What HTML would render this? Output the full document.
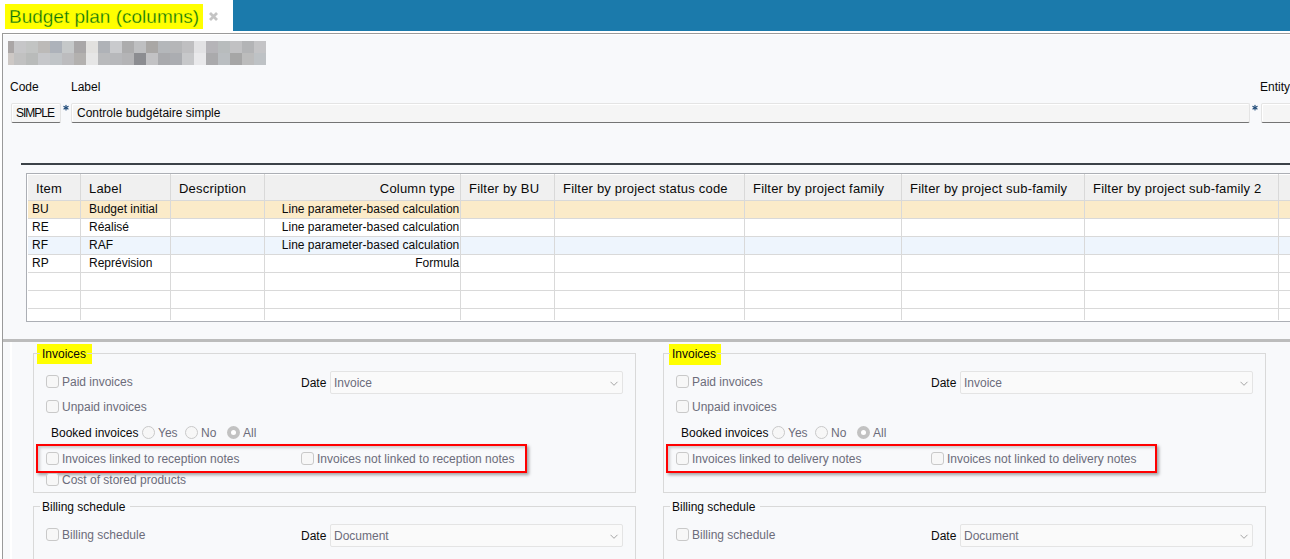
<!DOCTYPE html>
<html><head><meta charset="utf-8">
<style>
html,body{margin:0;padding:0;}
body{width:1290px;height:559px;overflow:hidden;position:relative;background:#fff;font-family:"Liberation Sans",sans-serif;font-size:12px;color:#0a0a0a;}
.a{position:absolute;white-space:nowrap;}
.t{position:absolute;white-space:nowrap;line-height:14px;font-size:12px;}
.h{position:absolute;white-space:nowrap;line-height:15px;font-size:13px;color:#0a0a0a;letter-spacing:0.2px;}
.g{color:#6c6c7a;}
.bx{position:absolute;box-sizing:border-box;}
.cb{position:absolute;box-sizing:border-box;width:13px;height:13px;border:1px solid #c9c9c9;border-radius:3px;background:#f7f7f7;}
.rd{position:absolute;box-sizing:border-box;width:13px;height:13px;border:1px solid #c9c9c9;border-radius:50%;background:#f7f7f7;}
.rdc{position:absolute;box-sizing:border-box;width:13px;height:13px;border-radius:50%;background:#c2c2c2;}
.rdc:after{content:"";position:absolute;left:4px;top:4px;width:5px;height:5px;border-radius:50%;background:#fff;}
.sel{position:absolute;box-sizing:border-box;height:23px;border:1px solid #e4e4e4;border-radius:2px;background:#fafafa;}
.chev{position:absolute;width:8px;height:5px;}
.fs{position:absolute;box-sizing:border-box;border:1px solid #d9d9d9;}
.red{position:absolute;box-sizing:border-box;border:2px solid #ff0000;box-shadow:2px 2px 3px rgba(0,0,0,.35), inset 2px 2px 3px rgba(0,0,0,.18);}
.row{position:absolute;left:28px;width:1262px;height:18px;}
.vl{position:absolute;width:1px;background:#d9d9d9;}
.hl2{position:absolute;height:1px;background:#d9d9d9;}
.hl{position:absolute;height:1px;background:#d9d9d9;}
.mz{position:absolute;width:12px;height:12px;}
</style></head><body>

<!-- tab bar -->
<div class="bx" style="left:5px;top:4px;width:198px;height:25px;background:#ffff00;"></div>
<div class="a" style="left:9px;top:6px;font-size:19px;line-height:22px;color:#0b720b;-webkit-text-stroke:0.3px #ffff00;">Budget plan (columns)</div>
<svg class="a" style="left:208px;top:11px;" width="11" height="11" viewBox="0 0 11 11"><path d="M2 2 L9 9 M9 2 L2 9" stroke="#c4c4c4" stroke-width="2.8"/></svg>
<div class="bx" style="left:233px;top:0;width:1057px;height:31px;background:#1b7aab;"></div>

<!-- panel -->
<div class="bx" style="left:2px;top:33px;width:1288px;height:526px;background:#f8f9fb;border-left:1px solid #9a9a9a;border-top:1px solid #9a9a9a;"></div>
<div class="bx" style="left:3px;top:34px;width:1287px;height:1px;background:#fff;"></div>

<!-- mosaic -->
<div class="mz" style="left:8px;top:41px;width:6px;background:#aaa6a6;"></div>
<div class="mz" style="left:14px;top:41px;width:12px;background:#c6c6c8;"></div>
<div class="mz" style="left:26px;top:41px;width:12px;background:#c2c4c3;"></div>
<div class="mz" style="left:38px;top:41px;width:12px;background:#bcbab8;"></div>
<div class="mz" style="left:50px;top:41px;width:12px;background:#adb2ba;"></div>
<div class="mz" style="left:62px;top:41px;width:12px;background:#c5c8c9;"></div>
<div class="mz" style="left:74px;top:41px;width:12px;background:#a9a7a8;"></div>
<div class="mz" style="left:86px;top:41px;width:12px;background:#e2e1df;"></div>
<div class="mz" style="left:98px;top:41px;width:12px;background:#afb2b7;"></div>
<div class="mz" style="left:110px;top:41px;width:12px;background:#c9cacd;"></div>
<div class="mz" style="left:122px;top:41px;width:12px;background:#acacad;"></div>
<div class="mz" style="left:134px;top:41px;width:12px;background:#bebfc1;"></div>
<div class="mz" style="left:146px;top:41px;width:12px;background:#a9a7a5;"></div>
<div class="mz" style="left:158px;top:41px;width:12px;background:#b4b7ba;"></div>
<div class="mz" style="left:170px;top:41px;width:12px;background:#b5b6b8;"></div>
<div class="mz" style="left:182px;top:41px;width:12px;background:#bfbfc1;"></div>
<div class="mz" style="left:194px;top:41px;width:12px;background:#e2e2e4;"></div>
<div class="mz" style="left:206px;top:41px;width:12px;background:#b5b4b8;"></div>
<div class="mz" style="left:218px;top:41px;width:12px;background:#b8bcbd;"></div>
<div class="mz" style="left:230px;top:41px;width:12px;background:#c1c1c3;"></div>
<div class="mz" style="left:242px;top:41px;width:12px;background:#b3b4b6;"></div>
<div class="mz" style="left:254px;top:41px;width:12px;background:#c4c4c6;"></div>
<div class="mz" style="left:8px;top:53px;width:6px;background:#cdc8c5;"></div>
<div class="mz" style="left:14px;top:53px;width:12px;background:#c1c1c1;"></div>
<div class="mz" style="left:26px;top:53px;width:12px;background:#b9bbba;"></div>
<div class="mz" style="left:38px;top:53px;width:12px;background:#c6c7ca;"></div>
<div class="mz" style="left:50px;top:53px;width:12px;background:#c0c4c7;"></div>
<div class="mz" style="left:62px;top:53px;width:12px;background:#bcbcbe;"></div>
<div class="mz" style="left:74px;top:53px;width:12px;background:#b3b1af;"></div>
<div class="mz" style="left:86px;top:53px;width:12px;background:#e6e6e6;"></div>
<div class="mz" style="left:98px;top:53px;width:12px;background:#b9babc;"></div>
<div class="mz" style="left:110px;top:53px;width:12px;background:#b7b8bb;"></div>
<div class="mz" style="left:122px;top:53px;width:12px;background:#b4b4b6;"></div>
<div class="mz" style="left:134px;top:53px;width:12px;background:#8c8d91;"></div>
<div class="mz" style="left:146px;top:53px;width:12px;background:#c2c2c4;"></div>
<div class="mz" style="left:158px;top:53px;width:12px;background:#a9aaad;"></div>
<div class="mz" style="left:170px;top:53px;width:12px;background:#abadb1;"></div>
<div class="mz" style="left:182px;top:53px;width:12px;background:#c7c8ca;"></div>
<div class="mz" style="left:194px;top:53px;width:12px;background:#e9e9eb;"></div>
<div class="mz" style="left:206px;top:53px;width:12px;background:#aaaaac;"></div>
<div class="mz" style="left:218px;top:53px;width:12px;background:#babec1;"></div>
<div class="mz" style="left:230px;top:53px;width:12px;background:#a6a6a6;"></div>
<div class="mz" style="left:242px;top:53px;width:12px;background:#bcbcbc;"></div>
<div class="mz" style="left:254px;top:53px;width:12px;background:#bec2c5;"></div>

<!-- form -->
<div class="t" style="left:10px;top:80px;">Code</div>
<div class="t" style="left:71px;top:80px;">Label</div>
<div class="t" style="left:1260px;top:80px;">Entity</div>

<div class="bx" style="left:11px;top:103px;width:50px;height:20px;background:#f5f5f5;border:1px solid #e4e4e4;border-bottom:1px solid #747474;border-radius:2px;box-shadow:inset 1px 1px 0 #fff;"></div>
<div class="t" style="left:16px;top:106px;letter-spacing:-1px;">SIMPLE</div>
<svg class="a" style="left:62px;top:104px;" width="8" height="8" viewBox="0 0 8 8"><g stroke="#1f4a78" stroke-width="1.15" stroke-linecap="round"><path d="M4 1.4 V6"/><path d="M1.9 2.4 L6.1 5"/><path d="M6.1 2.4 L1.9 5"/></g></svg>
<div class="bx" style="left:71px;top:103px;width:1179px;height:20px;background:#f5f5f5;border:1px solid #e4e4e4;border-bottom:1px solid #747474;border-radius:2px;box-shadow:inset 1px 1px 0 #fff;"></div>
<div class="t" style="left:77px;top:106px;">Controle budgétaire simple</div>
<svg class="a" style="left:1251px;top:104px;" width="8" height="8" viewBox="0 0 8 8"><g stroke="#1f4a78" stroke-width="1.15" stroke-linecap="round"><path d="M4 1.4 V6"/><path d="M1.9 2.4 L6.1 5"/><path d="M6.1 2.4 L1.9 5"/></g></svg>
<div class="bx" style="left:1261px;top:103px;width:40px;height:20px;background:#f5f5f5;border:1px solid #e4e4e4;border-bottom:1px solid #747474;border-radius:2px;box-shadow:inset 1px 1px 0 #fff;"></div>

<div class="bx" style="left:21px;top:163px;width:1269px;height:2px;background:#3c4248;"></div>

<!-- table -->
<div class="bx" style="left:26px;top:173px;width:1270px;height:149px;border:1px solid #acafb5;background:#fff;"></div>
<div class="bx" style="left:28px;top:175px;width:1262px;height:25px;background:#f0f0f0;"></div>
<div class="row" style="top:201px;background:#fbebc9;height:17px;"></div>
<div class="row" style="top:237px;background:#eef5fd;height:17px;"></div>
<div class="hl" style="left:28px;top:200px;width:1262px;"></div>
<div class="hl" style="left:28px;top:218px;width:1262px;"></div>
<div class="hl" style="left:28px;top:236px;width:1262px;"></div>
<div class="hl" style="left:28px;top:254px;width:1262px;"></div>
<div class="hl" style="left:28px;top:272px;width:1262px;"></div>
<div class="hl" style="left:28px;top:290px;width:1262px;"></div>
<div class="hl" style="left:28px;top:308px;width:1262px;"></div>
<div class="vl" style="left:80px;top:174px;height:146px;"></div>
<div class="vl" style="left:170px;top:174px;height:146px;"></div>
<div class="vl" style="left:264px;top:174px;height:146px;"></div>
<div class="vl" style="left:460px;top:174px;height:146px;"></div>
<div class="vl" style="left:554px;top:174px;height:146px;"></div>
<div class="vl" style="left:744px;top:174px;height:146px;"></div>
<div class="vl" style="left:901px;top:174px;height:146px;"></div>
<div class="vl" style="left:1084px;top:174px;height:146px;"></div>
<div class="vl" style="left:1278px;top:174px;height:146px;"></div>

<div class="h" style="left:36px;top:181px;">Item</div>
<div class="h" style="left:89px;top:181px;">Label</div>
<div class="h" style="left:179px;top:181px;">Description</div>
<div class="h" style="left:264px;width:191px;text-align:right;top:181px;">Column type</div>
<div class="h" style="left:469px;top:181px;">Filter by BU</div>
<div class="h" style="left:563px;top:181px;">Filter by project status code</div>
<div class="h" style="left:753px;top:181px;">Filter by project family</div>
<div class="h" style="left:910px;top:181px;">Filter by project sub-family</div>
<div class="h" style="left:1093px;top:181px;">Filter by project sub-family 2</div>

<div class="t" style="left:32px;top:202px;">BU</div>
<div class="t" style="left:89px;top:202px;">Budget initial</div>
<div class="t" style="left:264px;width:195.3px;text-align:right;top:202px;">Line parameter-based calculation</div>
<div class="t" style="left:32px;top:220px;">RE</div>
<div class="t" style="left:89px;top:220px;">Réalisé</div>
<div class="t" style="left:264px;width:195.3px;text-align:right;top:220px;">Line parameter-based calculation</div>
<div class="t" style="left:32px;top:238px;">RF</div>
<div class="t" style="left:89px;top:238px;">RAF</div>
<div class="t" style="left:264px;width:195.3px;text-align:right;top:238px;">Line parameter-based calculation</div>
<div class="t" style="left:32px;top:256px;">RP</div>
<div class="t" style="left:89px;top:256px;">Reprévision</div>
<div class="t" style="left:264px;width:195.3px;text-align:right;top:256px;">Formula</div>

<!-- separator -->
<div class="bx" style="left:3px;top:339px;width:1287px;height:3px;background:#bcbcbc;"></div>

<div class="bx" style="left:10px;top:342px;width:2px;height:217px;background:#ffffff;"></div>
<!-- sections -->
<div class="bx" style="left:37px;top:344px;width:55px;height:20px;background:#ffff00;"></div>
<div class="fs" style="left:33px;top:353px;width:603px;height:140px;border-top:none;"></div>
<div class="hl2" style="left:33px;top:353px;width:7px;"></div>
<div class="hl2" style="left:87px;top:353px;width:549px;"></div>
<div class="t" style="left:42px;top:347px;">Invoices</div>
<div class="cb" style="left:46px;top:375px;"></div>
<div class="t g" style="left:62px;top:375px;">Paid invoices</div>
<div class="t" style="left:301px;top:376px;">Date</div>
<div class="sel" style="left:330px;top:371px;width:293px;"></div>
<div class="t g" style="left:334px;top:376px;">Invoice</div>
<svg class="a" style="left:610px;top:380.6px;" width="9" height="6" viewBox="0 0 9 6"><path d="M0.5 0.8 L4 4.3 L7.5 0.8" fill="none" stroke="#a0a0a0" stroke-width="0.95"/></svg>
<div class="cb" style="left:46px;top:400px;"></div>
<div class="t g" style="left:62px;top:400px;">Unpaid invoices</div>
<div class="t" style="left:51px;top:426px;">Booked invoices</div>
<div class="rd" style="left:142px;top:426px;"></div>
<div class="t g" style="left:158px;top:426px;">Yes</div>
<div class="rd" style="left:185px;top:426px;"></div>
<div class="t g" style="left:201px;top:426px;">No</div>
<div class="rdc" style="left:227px;top:426px;"></div>
<div class="t g" style="left:243px;top:426px;">All</div>
<div class="red" style="left:36px;top:444px;width:491px;height:29px;"></div>
<div class="cb" style="left:46px;top:452px;"></div>
<div class="t g" style="left:62px;top:452px;">Invoices linked to reception notes</div>
<div class="cb" style="left:301px;top:452px;"></div>
<div class="t g" style="left:317px;top:452px;">Invoices not linked to reception notes</div>
<div class="cb" style="left:46px;top:473px;"></div>
<div class="t g" style="left:62px;top:473px;">Cost of stored products</div>
<div class="fs" style="left:33px;top:506px;width:603px;height:80px;border-top:none;"></div>
<div class="hl2" style="left:33px;top:506px;width:7px;"></div>
<div class="hl2" style="left:130px;top:506px;width:506px;"></div>
<div class="t" style="left:42px;top:500px;">Billing schedule</div>
<div class="cb" style="left:46px;top:528px;"></div>
<div class="t g" style="left:62px;top:528px;">Billing schedule</div>
<div class="t" style="left:301px;top:529px;">Date</div>
<div class="sel" style="left:330px;top:524px;width:293px;"></div>
<div class="t g" style="left:334px;top:529px;">Document</div>
<svg class="a" style="left:610px;top:533.6px;" width="9" height="6" viewBox="0 0 9 6"><path d="M0.5 0.8 L4 4.3 L7.5 0.8" fill="none" stroke="#a0a0a0" stroke-width="0.95"/></svg>
<div class="bx" style="left:669px;top:344px;width:52px;height:21px;background:#ffff00;"></div>
<div class="fs" style="left:663px;top:353px;width:603px;height:140px;border-top:none;"></div>
<div class="hl2" style="left:663px;top:353px;width:7px;"></div>
<div class="hl2" style="left:717px;top:353px;width:549px;"></div>
<div class="t" style="left:672px;top:347px;">Invoices</div>
<div class="cb" style="left:676px;top:375px;"></div>
<div class="t g" style="left:692px;top:375px;">Paid invoices</div>
<div class="t" style="left:931px;top:376px;">Date</div>
<div class="sel" style="left:960px;top:371px;width:293px;"></div>
<div class="t g" style="left:964px;top:376px;">Invoice</div>
<svg class="a" style="left:1240px;top:380.6px;" width="9" height="6" viewBox="0 0 9 6"><path d="M0.5 0.8 L4 4.3 L7.5 0.8" fill="none" stroke="#a0a0a0" stroke-width="0.95"/></svg>
<div class="cb" style="left:676px;top:400px;"></div>
<div class="t g" style="left:692px;top:400px;">Unpaid invoices</div>
<div class="t" style="left:681px;top:426px;">Booked invoices</div>
<div class="rd" style="left:772px;top:426px;"></div>
<div class="t g" style="left:788px;top:426px;">Yes</div>
<div class="rd" style="left:815px;top:426px;"></div>
<div class="t g" style="left:831px;top:426px;">No</div>
<div class="rdc" style="left:857px;top:426px;"></div>
<div class="t g" style="left:873px;top:426px;">All</div>
<div class="red" style="left:666px;top:444px;width:491px;height:29px;"></div>
<div class="cb" style="left:676px;top:452px;"></div>
<div class="t g" style="left:692px;top:452px;">Invoices linked to delivery notes</div>
<div class="cb" style="left:931px;top:452px;"></div>
<div class="t g" style="left:947px;top:452px;">Invoices not linked to delivery notes</div>
<div class="fs" style="left:663px;top:506px;width:603px;height:80px;border-top:none;"></div>
<div class="hl2" style="left:663px;top:506px;width:7px;"></div>
<div class="hl2" style="left:760px;top:506px;width:506px;"></div>
<div class="t" style="left:672px;top:500px;">Billing schedule</div>
<div class="cb" style="left:676px;top:528px;"></div>
<div class="t g" style="left:692px;top:528px;">Billing schedule</div>
<div class="t" style="left:931px;top:529px;">Date</div>
<div class="sel" style="left:960px;top:524px;width:293px;"></div>
<div class="t g" style="left:964px;top:529px;">Document</div>
<svg class="a" style="left:1240px;top:533.6px;" width="9" height="6" viewBox="0 0 9 6"><path d="M0.5 0.8 L4 4.3 L7.5 0.8" fill="none" stroke="#a0a0a0" stroke-width="0.95"/></svg>
<!-- /sections -->
</body></html>
